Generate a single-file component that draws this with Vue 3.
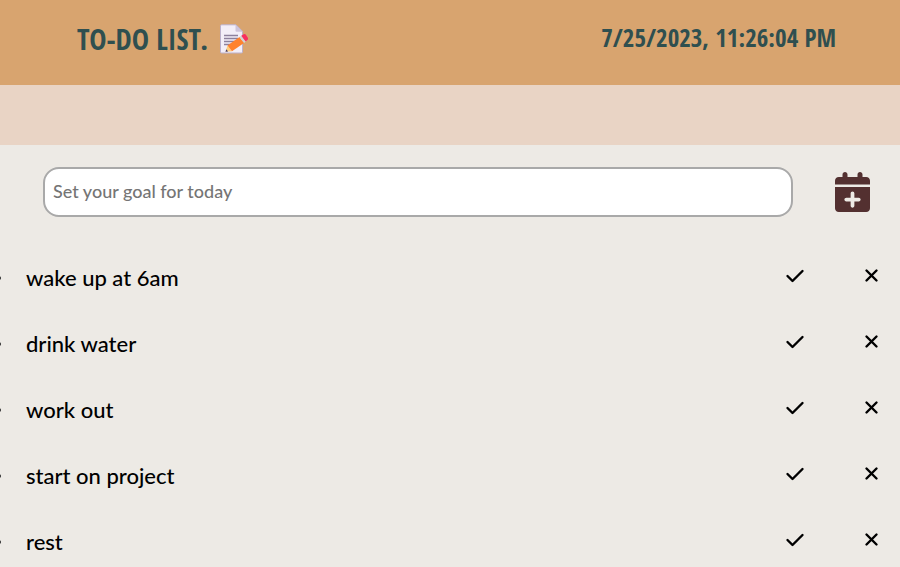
<script setup>
import { ref } from 'vue'

const stamp = ref('7/25/2023, 11:26:04 PM')
const draft = ref('')
const goals = ref([
  { id: 1, text: 'wake up at 6am', done: false },
  { id: 2, text: 'drink water', done: false },
  { id: 3, text: 'work out', done: false },
  { id: 4, text: 'start on project', done: false },
  { id: 5, text: 'rest', done: false }
])
let nextId = 6

function addGoal() {
  const text = draft.value.trim()
  if (!text) return
  goals.value.push({ id: nextId++, text, done: false })
  draft.value = ''
}

function removeGoal(id) {
  goals.value = goals.value.filter((goal) => goal.id !== id)
}
</script>

<template>
  <div class="page">
    <header class="header">
      <h1 class="title">
        TO-DO LIST.
        <svg class="memo" viewBox="0 0 28 30" aria-hidden="true">
          <path d="M1.5 .8H16l6.500 6.500V28a1 1 0 0 1-1 1H1.500a1 1 0 0 1-1-1V1.800a1 1 0 0 1 1-1Z" fill="#f3eef8" stroke="#bbb0cb" />
          <path d="M15.500 1v5.700a1 1 0 0 0 1 1H22.500Z" fill="#cdc3da" />
          <path d="M4 11.500h14M4 14.500h14M4 17.500h11M4 20.500h7" stroke="#8d819d" stroke-width="1.300" />
          <path d="M5.500 27.800 7.500 21.500l4.500 5.700Z" fill="#ffce7c" />
          <path d="m5.500 27.800.8-2.500 1.800 2.100Z" fill="#433b6b" />
          <path d="M7.500 21.500 19.500 13l4.500 6-12 8.200Z" fill="#ff822d" />
          <path d="m19.500 13 2-1.400 4.400 6-1.900 1.400Z" fill="#d3d3d3" />
          <path d="m21.300 11.700 1.900-1.300a2 2 0 0 1 2.700.4l1.800 2.600a2 2 0 0 1-.4 2.700l-1.700 1.300Z" fill="#f92f60" />
        </svg>
      </h1>
      <time class="clock">{{ stamp }}</time>
    </header>
    <div class="band"></div>
    <main>
      <form class="entry" @submit.prevent="addGoal">
        <input v-model="draft" class="field" type="text" aria-label="Goal" placeholder="Set your goal for today" />
        <button class="add" type="submit" aria-label="Add goal">
          <svg viewBox="0 0 448 512" width="35" height="40" aria-hidden="true">
            <path
              fill="currentColor"
              d="M96 32V64H48C21.500 64 0 85.500 0 112v48H448V112c0-26.500-21.500-48-48-48H352V32c0-17.700-14.300-32-32-32s-32 14.300-32 32V64H160V32c0-17.700-14.300-32-32-32S96 14.300 96 32ZM448 192H0V464c0 26.500 21.500 48 48 48H400c26.500 0 48-21.500 48-48V192ZM224 248c13.300 0 24 10.700 24 24v56h56c13.300 0 24 10.700 24 24s-10.700 24-24 24H248v56c0 13.300-10.700 24-24 24s-24-10.700-24-24V376H144c-13.300 0-24-10.700-24-24s10.700-24 24-24h56V272c0-13.300 10.700-24 24-24Z"
            />
          </svg>
        </button>
      </form>
      <ul class="goals">
        <li v-for="goal in goals" :key="goal.id" class="goal">
          <span class="text" :class="{ done: goal.done }">{{ goal.text }}</span>
          <button class="action" type="button" :aria-label="`Complete ${goal.text}`" @click="goal.done = !goal.done">
            <svg viewBox="0 0 20 20" width="20" height="20" aria-hidden="true">
              <path d="M2.500 10 7.500 15 17.500 5" />
            </svg>
          </button>
          <button class="action" type="button" :aria-label="`Remove ${goal.text}`" @click="removeGoal(goal.id)">
            <svg viewBox="0 0 20 20" width="20" height="20" aria-hidden="true">
              <path d="m5.500 4.500 10 10m0-10-10 10" />
            </svg>
          </button>
        </li>
      </ul>
    </main>
  </div>
</template>

<style>
body {
  background: #edeae5;
}
</style>

<style scoped>
.page {
  font-family: Lato, "Noto Sans", sans-serif;
  color: #000;
  overflow-x: hidden;
}
.header {
  display: flex;
  justify-content: space-between;
  padding: 19px 64px 26px 77px;
  background: #d8a46f;
  color: #2f4f4f;
  font-family: "Open Sans Condensed", "Liberation Sans Narrow", sans-serif;
  font-weight: 700;
}
.title {
  display: flex;
  align-items: center;
  gap: 12px;
  margin: 0;
  font-size: 29px;
  line-height: 40px;
}
.memo {
  width: 28px;
  height: 30px;
}
.clock {
  font-size: 25px;
  line-height: 36px;
}
.band {
  height: 60px;
  background: #e9d4c5;
}
.entry {
  display: flex;
  align-items: center;
  gap: 42px;
  padding: 22px 30px 0 43px;
}
.field {
  flex: 1;
  min-width: 0;
  box-sizing: border-box;
  height: 50px;
  padding: 0 8px 2px;
  border: 2px solid #a9a9a9;
  border-radius: 16px;
  background: #fff;
  font: 500 18px Lato, sans-serif;
}
.field::placeholder {
  color: #757575;
  opacity: 1;
}
button {
  display: flex;
  padding: 0;
  border: 0;
  background: none;
  color: inherit;
  cursor: pointer;
}
.add {
  color: #533030;
}
.goals {
  display: flex;
  flex-direction: column;
  gap: 40px;
  margin: 48px 0 0 -3px;
  padding: 0 19px 0 0;
  list-style: none;
}
.goal {
  display: flex;
  align-items: center;
  gap: 56px;
  line-height: 26px;
  font-size: 22px;
  font-weight: 500;
}
.goal::before {
  content: "";
  width: 4px;
  height: 4px;
  margin-right: -31px;
  border-radius: 50%;
  background: #333;
}
.text {
  flex: 1;
}
.done {
  text-decoration: line-through;
}
.action {
  padding-bottom: 4px;
}
.action path {
  fill: none;
  stroke: currentColor;
  stroke-width: 2.4;
  stroke-linecap: round;
  stroke-linejoin: round;
}
</style>
